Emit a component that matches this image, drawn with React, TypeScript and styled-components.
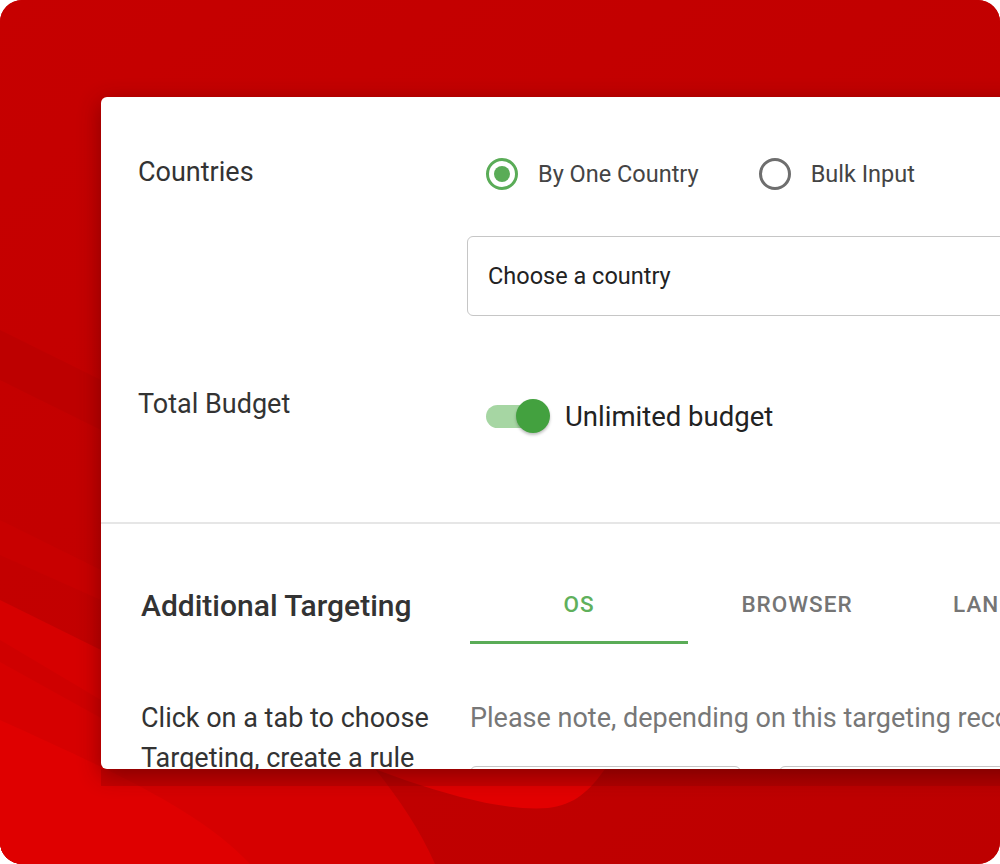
import React from "react";
import styled, { createGlobalStyle } from "styled-components";

const GlobalStyle = createGlobalStyle`
  body {
    margin: 0;
    background: #ffffff;
    font-family: Roboto, "Liberation Sans", sans-serif;
  }
`;

const Frame = styled.div`
  position: relative;
  width: 1000px;
  height: 864px;
  border-radius: 22px;
  overflow: hidden;
  background: #c30000;
`;

const Backdrop = styled.svg`
  position: absolute;
  inset: 0;
`;

const Card = styled.div`
  position: relative;
  margin: 97px 0 0 101px;
  width: 1000px;
  height: 672px;
  background: #ffffff;
  border-radius: 6px 0 0 6px;
  overflow: hidden;
  box-shadow: 0 6px 22px rgba(60, 0, 0, 0.45);
`;

const Section = styled.div<{ $pad: string }>`
  padding: ${(p) => p.$pad};
`;

const Divider = styled.div`
  height: 2px;
  background: #e6e6e6;
`;

const Row = styled.div<{ $top?: number }>`
  display: flex;
  align-items: flex-start;
  margin-top: ${(p) => p.$top ?? 0}px;
`;

const Label = styled.div<{ $lh?: number }>`
  width: 329px;
  flex-shrink: 0;
  font-size: 27px;
  line-height: ${(p) => p.$lh ?? 30}px;
  color: #333333;
  white-space: nowrap;
`;

const Field = styled.div`
  flex: 1;
  display: flex;
  flex-direction: column;
  min-width: 0;
`;

const RadioGroup = styled.div`
  display: flex;
  align-items: center;
  gap: 60px;
  padding-left: 19px;
  height: 34px;
`;

const RadioOption = styled.label`
  display: flex;
  align-items: center;
  gap: 20px;
  font-size: 23.5px;
  color: #444444;
  white-space: nowrap;
`;

const RadioCircle = styled.span<{ $checked?: boolean }>`
  width: 32px;
  height: 32px;
  box-sizing: border-box;
  border-radius: 50%;
  border: 3px solid ${(p) => (p.$checked ? "#5aac57" : "#6e6e6e")};
  display: flex;
  align-items: center;
  justify-content: center;

  &::after {
    content: "";
    width: 16px;
    height: 16px;
    border-radius: 50%;
    background: ${(p) => (p.$checked ? "#5aac57" : "transparent")};
  }
`;

const Select = styled.div`
  margin-top: 45px;
  height: 80px;
  box-sizing: border-box;
  border: 1.5px solid #c6c6c6;
  border-radius: 6px;
  display: flex;
  align-items: center;
  padding-left: 20px;
  font-size: 23.5px;
  color: #222222;
`;

const ToggleRow = styled.div`
  display: flex;
  align-items: center;
  gap: 15px;
  margin: 9px 0 0 19px;
  font-size: 27.5px;
  color: #222222;
  white-space: nowrap;
`;

const Switch = styled.span`
  position: relative;
  width: 64px;
  height: 34px;
  display: flex;
  align-items: center;
`;

const Track = styled.span`
  width: 58px;
  height: 23px;
  border-radius: 12px;
  background: #a6d6a3;
`;

const Thumb = styled.span`
  position: absolute;
  right: 0;
  top: 0;
  width: 34px;
  height: 34px;
  border-radius: 50%;
  background: #43a13f;
  box-shadow: 0 2px 3px rgba(0, 0, 0, 0.25);
`;

const Heading = styled.div`
  width: 329px;
  flex-shrink: 0;
  font-size: 30px;
  font-weight: 500;
  color: #333333;
  align-self: center;
  white-space: nowrap;
`;

const Tabs = styled.div`
  display: flex;
`;

const Tab = styled.div<{ $active?: boolean }>`
  width: 218px;
  height: 75px;
  flex-shrink: 0;
  display: flex;
  align-items: center;
  justify-content: center;
  font-size: 22.5px;
  font-weight: 500;
  letter-spacing: 1px;
  color: ${(p) => (p.$active ? "#5fb05c" : "#757575")};
  border-bottom: 3px solid ${(p) => (p.$active ? "#5aac57" : "transparent")};
  white-space: nowrap;
`;

const Note = styled.div`
  font-size: 27px;
  line-height: 40px;
  color: #777777;
  white-space: nowrap;
`;

const Boxes = styled.div`
  display: flex;
  gap: 38px;
  margin-top: 28px;
`;

const Box = styled.div<{ $w: number }>`
  width: ${(p) => p.$w}px;
  height: 60px;
  border: 1.5px solid #c6c6c6;
  border-radius: 6px;
  flex-shrink: 0;
`;

function Background() {
  return (
    <Backdrop width="1000" height="864" viewBox="0 0 1000 864">
      <defs>
        <linearGradient id="top" x1="0" y1="0" x2="1" y2="1">
          <stop offset="0" stopColor="#c60000" />
          <stop offset="1" stopColor="#bd0000" />
        </linearGradient>
      </defs>
      <rect width="1000" height="864" fill="url(#top)" />
      <path d="M0 330 L101 380 L101 430 L0 380 Z" fill="#bd0000" />
      <path d="M0 520 L101 570 L101 600 L0 555 Z" fill="#c80000" />
      <path d="M0 600 L101 650 L101 769 L375 769 C400 800 420 830 435 864 L0 864 Z" fill="#d60000" />
      <path d="M0 640 L101 700 L101 718 L0 662 Z" fill="#cf0000" />
      <path d="M0 720 C110 770 200 810 250 864 L0 864 Z" fill="#df0000" />
      <path d="M375 769 C430 790 500 812 548 808 C575 805 590 790 605 769 Z" fill="#e20000" />
      <path d="M101 769 L1000 769 L1000 786 L101 786 Z" fill="#900000" opacity="0.3" />
    </Backdrop>
  );
}

export default function App() {
  return (
    <>
      <GlobalStyle />
      <Frame>
        <Background />
        <Card>
          <Section $pad="60px 0 89px 37px">
            <Row>
              <Label $lh={30}>Countries</Label>
              <Field>
                <RadioGroup>
                  <RadioOption>
                    <RadioCircle $checked />
                    By One Country
                  </RadioOption>
                  <RadioOption>
                    <RadioCircle />
                    Bulk Input
                  </RadioOption>
                </RadioGroup>
                <Select>Choose a country</Select>
              </Field>
            </Row>
            <Row $top={74}>
              <Label $lh={28}>Total Budget</Label>
              <Field>
                <ToggleRow>
                  <Switch>
                    <Track />
                    <Thumb />
                  </Switch>
                  Unlimited budget
                </ToggleRow>
              </Field>
            </Row>
          </Section>
          <Divider />
          <Section $pad="42px 0 0 40px">
            <Row>
              <Heading>Additional Targeting</Heading>
              <Tabs>
                <Tab $active>OS</Tab>
                <Tab>BROWSER</Tab>
                <Tab>LANGUAGE</Tab>
              </Tabs>
            </Row>
            <Row $top={54}>
              <Label $lh={40}>
                Click on a tab to choose
                <br />
                Targeting, create a rule
              </Label>
              <Field>
                <Note>Please note, depending on this targeting recommendations may vary</Note>
                <Boxes>
                  <Box $w={269} />
                  <Box $w={269} />
                </Boxes>
              </Field>
            </Row>
          </Section>
        </Card>
      </Frame>
    </>
  );
}
